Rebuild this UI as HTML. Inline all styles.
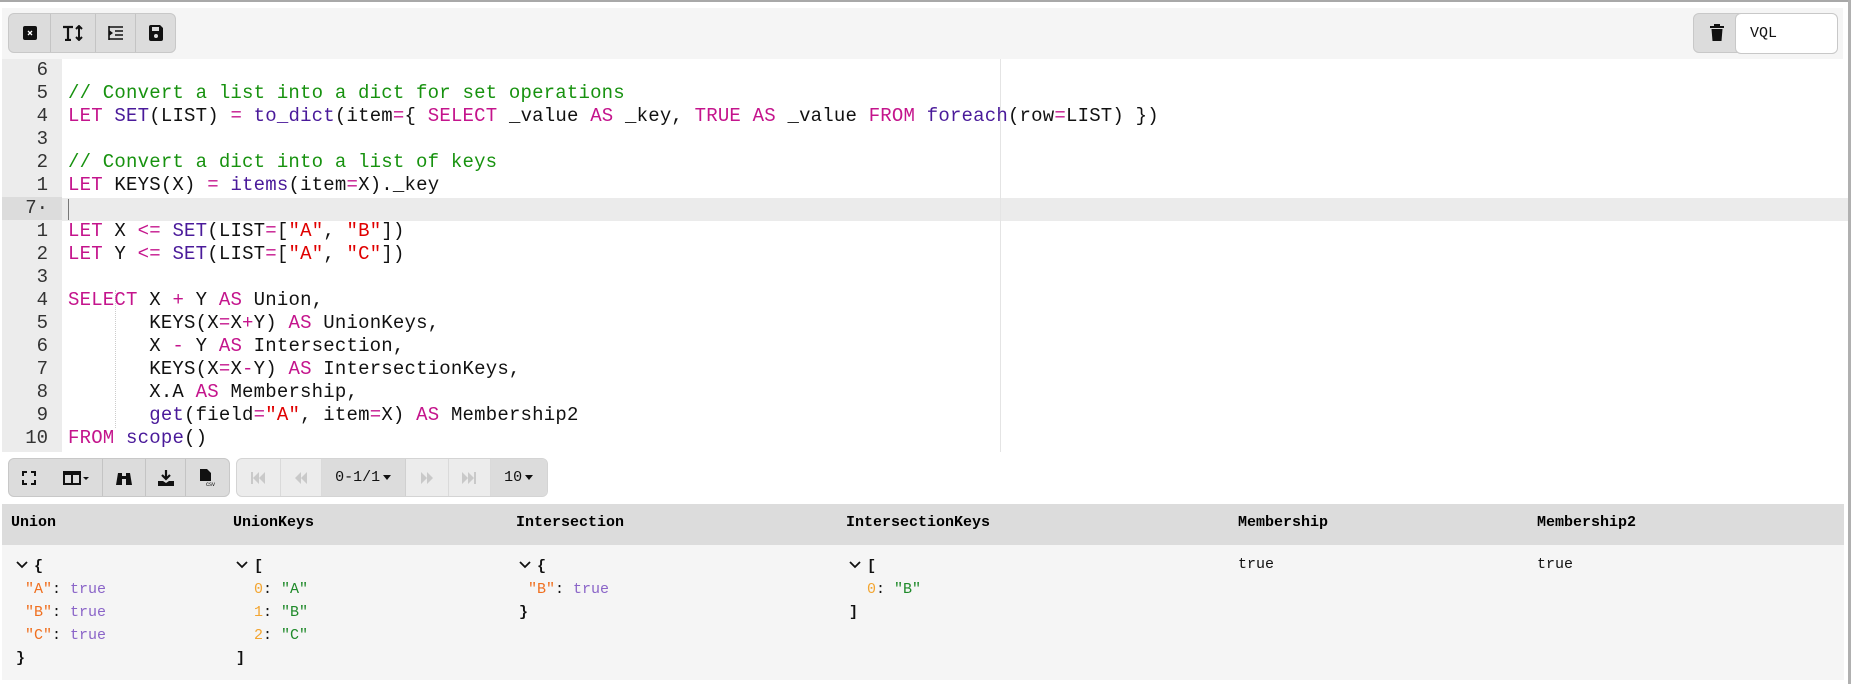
<!DOCTYPE html>
<html><head><meta charset="utf-8"><style>
*{margin:0;padding:0;box-sizing:border-box}
body{width:1851px;height:684px;background:#fff;position:relative;overflow:hidden;font-family:"Liberation Mono",monospace}
.abs{position:absolute}
.btngrp{position:absolute;border:1px solid #c8c8c8;border-radius:6px;background:#dcdcdc;display:flex;overflow:hidden}
.btngrp div{height:100%;display:flex;align-items:center;justify-content:center;border-right:1px solid #c4c4c4}
.btngrp div:last-child{border-right:none}
.code{position:absolute;left:68px;top:59px;font-size:19px;letter-spacing:0.2px;line-height:23px;white-space:pre;color:#111}
.gut{position:absolute;left:2px;top:59px;width:60px;height:393px;background:#ececec;font-size:19px;line-height:23px;color:#333;text-align:right;padding-right:14px;white-space:pre}
.k{color:#c4148c}.f{color:#4a1a9a}.c{color:#17920f}.s{color:#e00000}
.tbl{position:absolute;font-size:15px;line-height:23px;white-space:pre;color:#111}
.h{font-weight:bold;font-size:15px;position:absolute;top:514px}
.ky{color:#f07020}.tr{color:#8a64c8}.ix{color:#f3a530}.sv{color:#1f8a2a}
.chev{display:inline-block;width:12px;height:8px;margin-right:6px;vertical-align:1px}
</style></head><body>
<div class="abs" style="left:0;top:0;width:1851px;height:2px;background:#a8a8a8"></div>
<div class="abs" style="left:1848px;top:0;width:3px;height:684px;background:#b0b0b0"></div>
<div class="abs" style="left:2px;top:8px;width:1841px;height:51px;background:#f5f5f5"></div>
<div class="btngrp" style="left:8px;top:13px;width:168px;height:40px">
 <div style="width:43px"><svg width="14" height="14"><rect x="0" y="0" width="14" height="14" rx="2" fill="#111"/><path d="M5 5l4 4M9 5l-4 4" stroke="#fff" stroke-width="1.3"/></svg></div>
 <div style="width:45px"><svg width="22" height="16"><path d="M1 2h10M6 2v13M3 15h6" stroke="#111" stroke-width="2.2" fill="none"/><path d="M17 1v14M14 4l3-3 3 3M14 12l3 3 3-3" stroke="#111" stroke-width="2" fill="none"/></svg></div>
 <div style="width:41px"><svg width="16" height="16"><path d="M1 2h14M7 6h8M7 10h8M1 14h14M1 1v14" stroke="#111" stroke-width="1.6" fill="none"/><path d="M1 5l4 3-4 3z" fill="#111"/></svg></div>
 <div style="width:39px"><svg width="14" height="16"><path d="M0 2a2 2 0 0 1 2-2h9l3 3v11a2 2 0 0 1-2 2h-10a2 2 0 0 1-2-2z" fill="#111"/><rect x="3" y="2" width="7" height="4" fill="#dcdcdc"/><circle cx="7" cy="11" r="2" fill="#dcdcdc"/></svg></div>
</div>
<div class="btngrp" style="left:1693px;top:13px;width:48px;height:40px;border-radius:6px 0 0 6px"><div style="width:48px"><svg width="14" height="18"><path d="M0 3h14M5 3V1h4v2" stroke="#111" stroke-width="2" fill="none"/><path d="M1.5 5h11l-1 12h-9z" fill="#111"/></svg></div></div>
<div class="abs" style="left:1735px;top:13px;width:103px;height:41px;background:#fff;border:1px solid #c8c8c8;border-radius:6px;font-size:15px;line-height:39px;padding-left:14px;color:#111">VQL</div>

<div class="gut">6
5
4
3
2
1
<span style="display:block;background:#dcdcdc;margin-right:-14px;padding-right:14px">7·</span>1
2
3
4
5
6
7
8
9
10</div>
<div class="abs" style="left:62px;top:198px;width:1786px;height:23px;background:#ebebeb"></div>
<div class="abs" style="left:1000px;top:59px;width:1px;height:393px;background:#e4e4e4"></div>
<div class="abs" style="left:68px;top:199px;width:1px;height:21px;background:#777"></div>
<div class="abs" style="left:115px;top:290px;width:0;height:138px;border-left:1px dotted #ccc"></div>
<div class="code">
<span class="c">// Convert a list into a dict for set operations</span>
<span class="k">LET</span> <span class="f">SET</span>(LIST) <span class="k">=</span> <span class="f">to_dict</span>(item<span class="k">=</span>{ <span class="k">SELECT</span> _value <span class="k">AS</span> _key, <span class="k">TRUE</span> <span class="k">AS</span> _value <span class="k">FROM</span> <span class="f">foreach</span>(row<span class="k">=</span>LIST) })

<span class="c">// Convert a dict into a list of keys</span>
<span class="k">LET</span> KEYS(X) <span class="k">=</span> <span class="f">items</span>(item<span class="k">=</span>X)._key

<span class="k">LET</span> X <span class="k">&lt;=</span> <span class="f">SET</span>(LIST<span class="k">=</span>[<span class="s">"A"</span>, <span class="s">"B"</span>])
<span class="k">LET</span> Y <span class="k">&lt;=</span> <span class="f">SET</span>(LIST<span class="k">=</span>[<span class="s">"A"</span>, <span class="s">"C"</span>])

<span class="k">SELECT</span> X <span class="k">+</span> Y <span class="k">AS</span> Union,
       KEYS(X<span class="k">=</span>X<span class="k">+</span>Y) <span class="k">AS</span> UnionKeys,
       X <span class="k">-</span> Y <span class="k">AS</span> Intersection,
       KEYS(X<span class="k">=</span>X<span class="k">-</span>Y) <span class="k">AS</span> IntersectionKeys,
       X.A <span class="k">AS</span> Membership,
       <span class="f">get</span>(field<span class="k">=</span><span class="s">"A"</span>, item<span class="k">=</span>X) <span class="k">AS</span> Membership2
<span class="k">FROM</span> <span class="f">scope</span>()</div>

<div class="btngrp" style="left:8px;top:458px;width:222px;height:39px">
 <div style="width:95px;justify-content:space-around"><svg width="14" height="14"><path d="M1 5V1h4M9 1h4v4M13 9v4H9M5 13H1V9" stroke="#111" stroke-width="2" fill="none"/></svg><svg width="26" height="14"><rect x="1" y="1" width="16" height="12" fill="none" stroke="#111" stroke-width="2"/><path d="M9 1v12M1 3h16" stroke="#111" stroke-width="2"/><path d="M20 6h6l-3 3z" fill="#111"/></svg></div>
 <div style="width:43px"><svg width="16" height="14"><path d="M2 2h4v12H0z M10 2h4l2 12h-6z" fill="#111"/><rect x="6" y="5" width="4" height="3" fill="#111"/></svg></div>
 <div style="width:41px"><svg width="16" height="16"><path d="M8 0v9M4 5l4 4 4-4" stroke="#111" stroke-width="2.2" fill="none"/><path d="M0 11h5l3 2 3-2h5v5H0z" fill="#111"/></svg></div>
 <div style="width:43px"><svg width="18" height="18"><path d="M1 0h7l4 4v8H1z" fill="#111"/><text x="7" y="17" font-size="6" font-family="Liberation Sans" fill="#111">csv</text></svg></div>
</div>
<div class="btngrp" style="left:236px;top:458px;width:312px;height:39px;background:#ececec;border-color:#d4d4d4">
 <div style="width:44px;border-color:#dadada"><svg width="14" height="12"><path d="M1 0v12" stroke="#c9c9c9" stroke-width="2"/><path d="M8 0v12L2 6zM14 0v12L8 6z" fill="#c9c9c9"/></svg></div>
 <div style="width:42px;border-color:#dadada"><svg width="12" height="12"><path d="M6 0v12L0 6zM12 0v12L6 6z" fill="#c9c9c9"/></svg></div>
 <div style="width:84px;background:#dcdcdc;font-size:15px;color:#111;border-color:#d0d0d0">0-1/1 <svg width="9" height="6" style="margin-left:3px"><path d="M0 0h8l-4 5z" fill="#111"/></svg></div>
 <div style="width:43px;border-color:#dadada"><svg width="12" height="12"><path d="M0 0v12L6 6zM6 0v12L12 6z" fill="#c9c9c9"/></svg></div>
 <div style="width:43px;border-color:#dadada"><svg width="14" height="12"><path d="M0 0v12L6 6zM6 0v12L12 6z" fill="#c9c9c9"/><path d="M13 0v12" stroke="#c9c9c9" stroke-width="2"/></svg></div>
 <div style="width:56px;background:#dcdcdc;font-size:15px;color:#111">10 <svg width="9" height="6" style="margin-left:3px"><path d="M0 0h8l-4 5z" fill="#111"/></svg></div>
</div>

<div class="abs" style="left:2px;top:504px;width:1842px;height:41px;background:#dcdcdc"></div>
<div class="abs" style="left:2px;top:545px;width:1842px;height:135px;background:#f5f5f5"></div>
<div class="h" style="left:11px">Union</div>
<div class="h" style="left:233px">UnionKeys</div>
<div class="h" style="left:516px">Intersection</div>
<div class="h" style="left:846px">IntersectionKeys</div>
<div class="h" style="left:1238px">Membership</div>
<div class="h" style="left:1537px">Membership2</div>

<div class="tbl" style="left:16px;top:555px"><svg class="chev" viewBox="0 0 12 8"><path d="M1 1l5 5 5-5" stroke="#111" stroke-width="1.8" fill="none"/></svg><b>{</b>
 <span class="ky">"A"</span>: <span class="tr">true</span>
 <span class="ky">"B"</span>: <span class="tr">true</span>
 <span class="ky">"C"</span>: <span class="tr">true</span>
<b>}</b></div>
<div class="tbl" style="left:236px;top:555px"><svg class="chev" viewBox="0 0 12 8"><path d="M1 1l5 5 5-5" stroke="#111" stroke-width="1.8" fill="none"/></svg><b>[</b>
  <span class="ix">0</span>: <span class="sv">"A"</span>
  <span class="ix">1</span>: <span class="sv">"B"</span>
  <span class="ix">2</span>: <span class="sv">"C"</span>
<b>]</b></div>
<div class="tbl" style="left:519px;top:555px"><svg class="chev" viewBox="0 0 12 8"><path d="M1 1l5 5 5-5" stroke="#111" stroke-width="1.8" fill="none"/></svg><b>{</b>
 <span class="ky">"B"</span>: <span class="tr">true</span>
<b>}</b></div>
<div class="tbl" style="left:849px;top:555px"><svg class="chev" viewBox="0 0 12 8"><path d="M1 1l5 5 5-5" stroke="#111" stroke-width="1.8" fill="none"/></svg><b>[</b>
  <span class="ix">0</span>: <span class="sv">"B"</span>
<b>]</b></div>
<div class="tbl" style="left:1238px;top:553px">true</div>
<div class="tbl" style="left:1537px;top:553px">true</div>
</body></html>
